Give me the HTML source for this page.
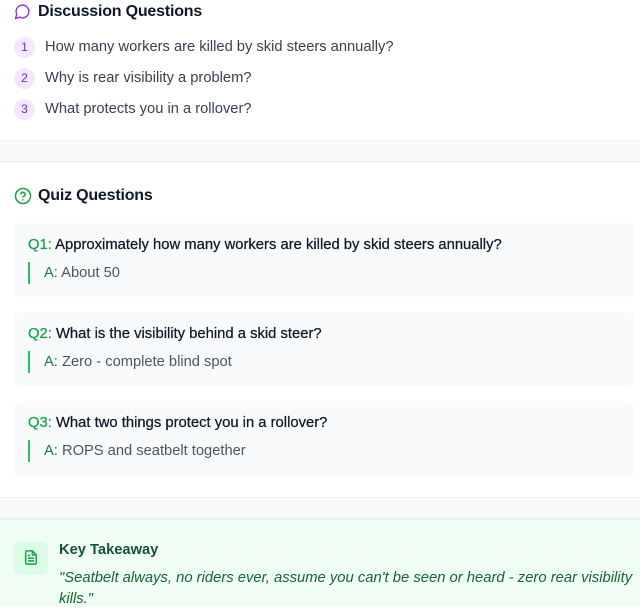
<!DOCTYPE html>
<html><head><meta charset="utf-8"><style>
*{margin:0;padding:0;box-sizing:border-box}
body{width:640px;height:607px;overflow:hidden;background:#fff;font-family:"Liberation Sans",sans-serif;color:#374151;position:relative}
.abs{position:absolute}
h2{font-size:16px;font-weight:bold;color:#111827;position:absolute;left:38px;letter-spacing:-0.2px}
.num{position:absolute;left:14px;width:21px;height:21px;border-radius:50%;background:#f3e8ff;color:#7e22ce;font-size:12px;text-align:center;line-height:21px}
.dq{position:absolute;left:45px;font-size:14.7px;color:#374151}
.band{position:absolute;left:0;width:640px;background:#f9fafb;border-top:1px solid #f0f1f3;border-bottom:1px solid #eceef1}
.card{position:absolute;left:14px;width:620px;background:#f9fafb;border-radius:6px}
.q{position:absolute;left:14px;top:14px;font-size:14.8px;color:#111827;white-space:nowrap;-webkit-text-stroke:0.25px #111827}
.q b{color:#16a34a;font-weight:normal;-webkit-text-stroke:0.25px #16a34a}
.a{position:absolute;left:14px;top:39px;height:22px;border-left:2px solid #22c55e;padding-left:14px;font-size:14.7px;line-height:22px;color:#4b5563}
.a b{color:#15803d;font-weight:normal}
</style></head><body>
<svg class="abs" style="left:14px;top:3px" width="17" height="17" viewBox="0 0 24 24" fill="none" stroke="#9333ea" stroke-width="2" stroke-linecap="round" stroke-linejoin="round"><path d="M7.9 20A9 9 0 1 0 4 16.1L2 22Z"/></svg>
<h2 style="top:3px">Discussion Questions</h2>
<div class="num" style="top:37px">1</div><div class="dq" style="top:39px">How many workers are killed by skid steers annually?</div>
<div class="num" style="top:68px">2</div><div class="dq" style="top:70px">Why is rear visibility a problem?</div>
<div class="num" style="top:99px">3</div><div class="dq" style="top:101px">What protects you in a rollover?</div>
<div class="band" style="top:140px;height:22px"></div>
<svg class="abs" style="left:14px;top:187px" width="18" height="18" viewBox="0 0 24 24" fill="none" stroke="#16a34a" stroke-width="2" stroke-linecap="round" stroke-linejoin="round"><circle cx="12" cy="12" r="10"/><path d="M9.1 9a3 3 0 0 1 5.8 1c0 2-3 3-3 3"/><path d="M12 17h.01"/></svg>
<h2 style="top:187px">Quiz Questions</h2>
<div class="card" style="top:223px;height:74px"><div class="q"><b>Q1:</b> Approximately how many workers are killed by skid steers annually?</div><div class="a"><b>A:</b> About 50</div></div>
<div class="card" style="top:312px;height:74px"><div class="q"><b>Q2:</b> What is the visibility behind a skid steer?</div><div class="a"><b>A:</b> Zero - complete blind spot</div></div>
<div class="card" style="top:401px;height:75px"><div class="q"><b>Q3:</b> What two things protect you in a rollover?</div><div class="a"><b>A:</b> ROPS and seatbelt together</div></div>
<div class="band" style="top:497px;height:22px"></div>
<div class="abs" style="left:0;top:519px;width:640px;height:88px;background:#f0fdf4;border-top:1px solid #dcfce7"></div>
<div class="abs" style="left:14px;top:541px;width:34px;height:34px;border-radius:6px;background:#dcfce7"></div>
<svg class="abs" style="left:23px;top:549px" width="16" height="17" viewBox="0 0 24 24" fill="none" stroke="#16a34a" stroke-width="2.2" stroke-linecap="round" stroke-linejoin="round"><path d="M14 2H6a2 2 0 0 0-2 2v16a2 2 0 0 0 2 2h12a2 2 0 0 0 2-2V8z"/><path d="M14 2v6h6"/><path d="M16 13H8M16 17H8M10 9H8"/></svg>
<div class="abs" style="left:59px;top:542px;font-size:14.7px;font-weight:bold;color:#14532d">Key Takeaway</div>
<div class="abs" style="left:59px;top:568px;width:581px;font-size:14.8px;font-style:italic;color:#166534;line-height:21px">"Seatbelt always, no riders ever, assume you can't be seen or heard - zero rear visibility kills."</div>
</body></html>
